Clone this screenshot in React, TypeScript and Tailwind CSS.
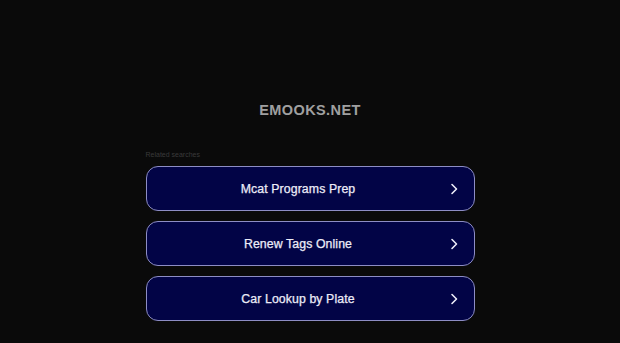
const SEARCHES: string[] = ["Mcat Programs Prep", "Renew Tags Online", "Car Lookup by Plate"];

const Chevron = () => (
  <svg className="w-[10px] h-[12px]" viewBox="0 0 10 12" fill="none" stroke="currentColor" strokeWidth="1.6" strokeLinecap="round" strokeLinejoin="round">
    <polyline points="3,1.5 7.5,6 3,10.5" />
  </svg>
);

export default function App() {
  return (
    <div className="w-full min-h-[343px] bg-[#0a0a0a] flex flex-col items-center font-['Liberation_Sans',Arial,sans-serif]">
      <h1 className="mt-[101px] text-[14.5px] leading-[18px] font-bold tracking-[0.4px] text-[#a0a0a0]">EMOOKS.NET</h1>
      <div className="mt-[32px] w-[329px]">
        <p className="text-[7px] leading-[8px] text-[#3a3a3a] mb-[7px]">Related searches</p>
        <div className="flex flex-col gap-[10px]">
          {SEARCHES.map((s) => (
            <div
              key={s}
              className="h-[45px] rounded-[12px] border border-[#8d8dc4] bg-[#020446] flex items-center relative"
            >
              <span className="flex-1 text-center pr-[24px] pt-[2px] text-[12.3px] tracking-[0.1px] text-[#ececf8] [-webkit-text-stroke:0.25px_#ececf8]">{s}</span>
              <span className="absolute right-[15px] top-[16px] text-[#ececf8]">
                <Chevron />
              </span>
            </div>
          ))}
        </div>
      </div>
    </div>
  );
}
